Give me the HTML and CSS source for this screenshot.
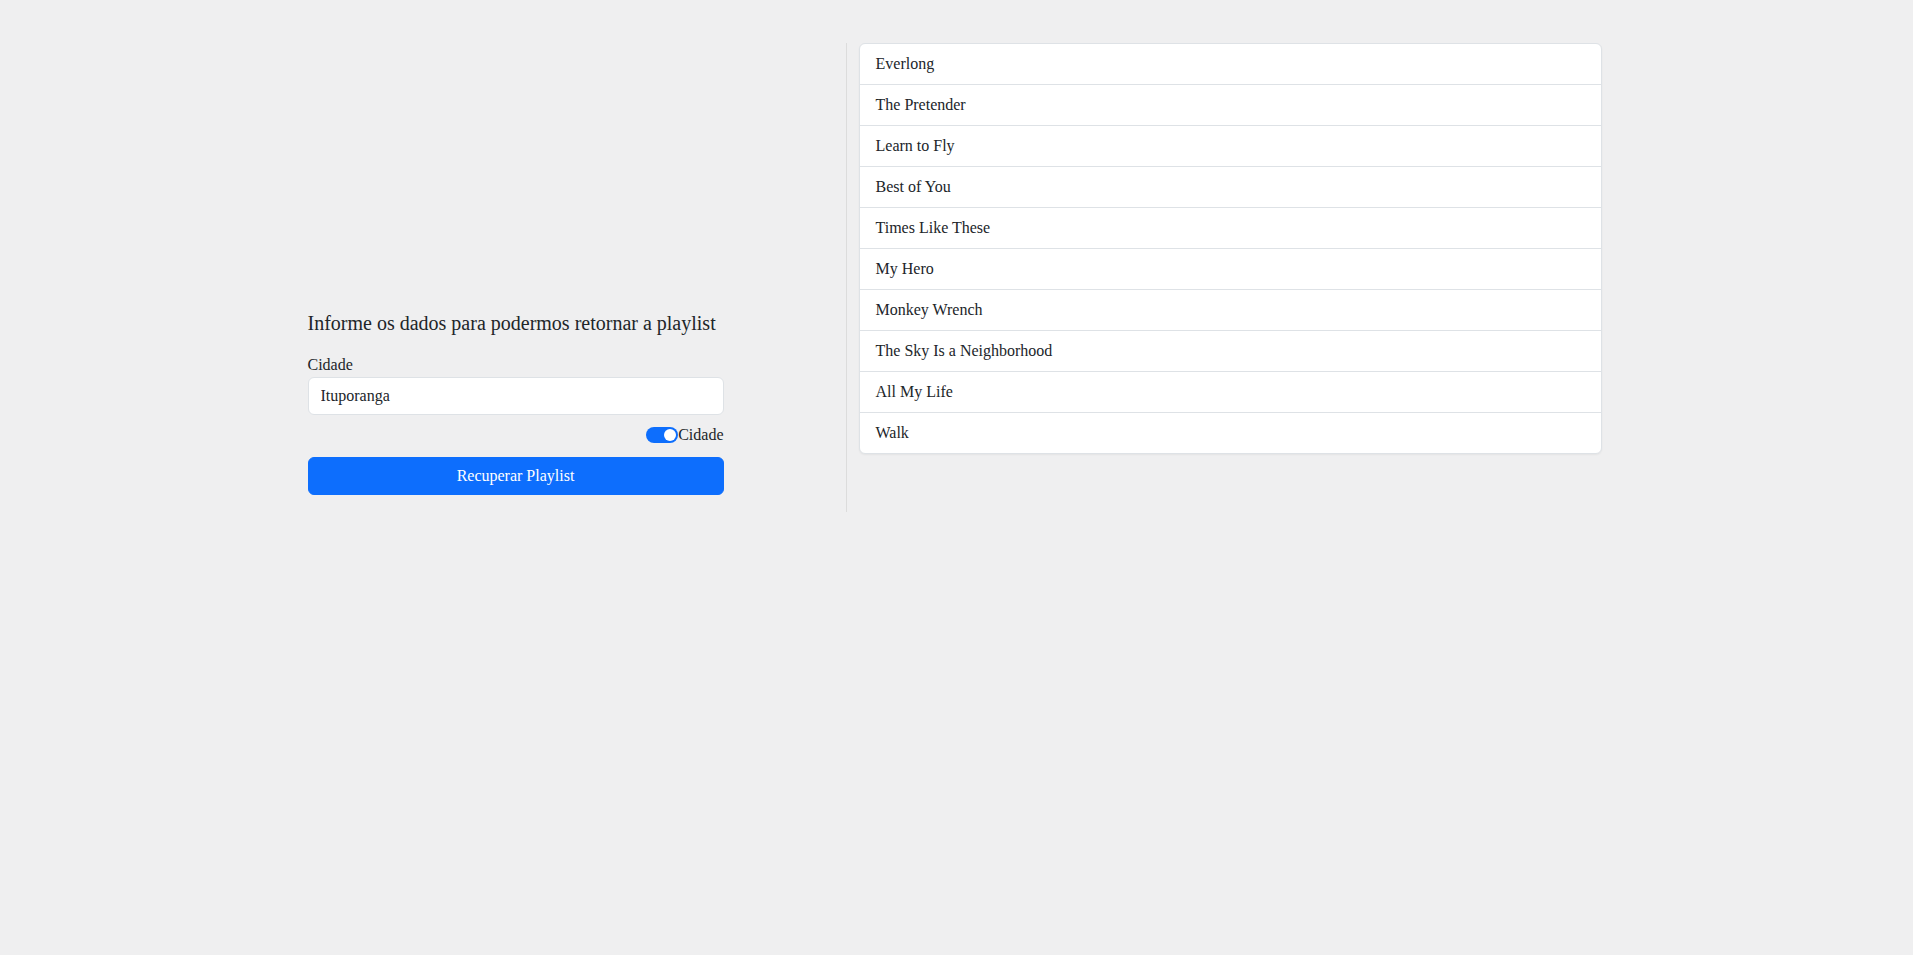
FILE: index.html
```html
<!DOCTYPE html>
<html lang="pt-BR">
<head>
<meta charset="utf-8">
<title>Playlist</title>
<link rel="stylesheet" href="styles.css">
</head>
<body>
<div class="container">
  <div class="row">
    <div class="col-form">
      <h5 class="title">Informe os dados para podermos retornar a playlist</h5>
      <label class="label" for="cidade">Cidade</label>
      <input class="input" id="cidade" type="text" value="Ituporanga">
      <div class="switch-row">
        <span class="switch"><span class="knob"></span></span>
        <span class="switch-label">Cidade</span>
      </div>
      <button class="btn" type="button">Recuperar Playlist</button>
    </div>
    <div class="col-gap"></div>
    <div class="col-list">
      <ul class="list">
        <li class="item">Everlong</li>
        <li class="item">The Pretender</li>
        <li class="item">Learn to Fly</li>
        <li class="item">Best of You</li>
        <li class="item">Times Like These</li>
        <li class="item">My Hero</li>
        <li class="item">Monkey Wrench</li>
        <li class="item">The Sky Is a Neighborhood</li>
        <li class="item">All My Life</li>
        <li class="item">Walk</li>
      </ul>
    </div>
  </div>
</div>
</body>
</html>
```

FILE: styles.css
```css
* { box-sizing: border-box; }
html, body { margin: 0; padding: 0; }
body {
  background: #efeff0;
  font-family: "Liberation Serif", "Times New Roman", serif;
  font-size: 16px;
  line-height: 24px;
  color: #212529;
}
.container {
  width: 1322px;
  margin: 0 auto;
  padding: 43px 2px 0 0;
}
.row {
  display: flex;
  align-items: stretch;
}
.col-form {
  flex: 0 0 440px;
  padding: 268px 12px 17px;
  display: flex;
  flex-direction: column;
}
.title {
  margin: 0 0 18px;
  font-size: 20px;
  line-height: 24px;
  font-weight: 400;
}
.label {
  display: block;
  line-height: 24px;
}
.input {
  display: block;
  width: 100%;
  height: 38px;
  padding: 6px 12px;
  border: 1px solid #dee2e6;
  border-radius: 6px;
  background: #fff;
  font-family: inherit;
  font-size: 16px;
  line-height: 24px;
  color: #212529;
  outline: none;
}
.switch-row {
  display: flex;
  justify-content: flex-end;
  align-items: center;
  height: 24px;
  margin-top: 8px;
  margin-bottom: 10px;
}
.switch {
  position: relative;
  width: 32px;
  height: 16px;
  border-radius: 8px;
  background: #0d6efd;
  flex: 0 0 auto;
}
.knob {
  position: absolute;
  right: 2px;
  top: 2px;
  width: 12px;
  height: 12px;
  border-radius: 50%;
  background: #fff;
}
.btn {
  display: block;
  width: 100%;
  height: 38px;
  padding: 6px 12px;
  border: 1px solid #0d6efd;
  border-radius: 6px;
  background: #0d6efd;
  color: #fff;
  font-family: inherit;
  font-size: 16px;
  line-height: 24px;
}
.col-gap {
  flex: 0 0 110px;
}
.col-list {
  flex: 1 1 auto;
  border-left: 1px solid #dcdcdc;
  padding: 0 14px 0 12px;
}
.list {
  list-style: none;
  margin: 0;
  padding: 0;
  background: #fff;
  border: 1px solid #dee2e6;
  border-radius: 6px;
  box-shadow: 0 1px 2px rgba(0, 0, 0, 0.05);
}
.item {
  padding: 8px 16px;
  line-height: 24px;
  border-top: 1px solid #dee2e6;
}
.item:first-child { border-top: 0; }
```
